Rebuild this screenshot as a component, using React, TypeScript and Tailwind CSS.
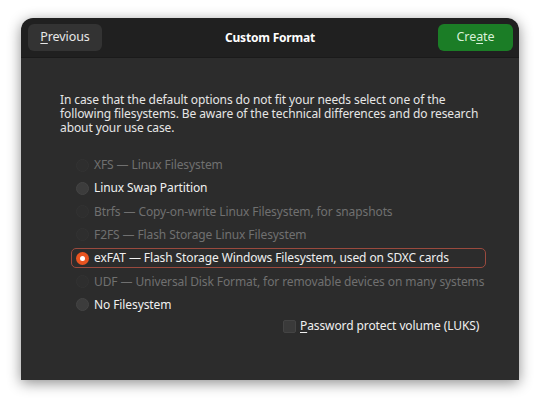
import React from "react";

const font = { fontFamily: '"Noto Sans", "Open Sans", sans-serif' };

function Radio({ state }: { state: "disabled" | "enabled" | "checked" }) {
  if (state === "checked") {
    return (
      <span className="flex h-[13px] w-[13px] shrink-0 items-center justify-center rounded-full bg-[#e95420]">
        <span className="h-[5px] w-[5px] rounded-full bg-white" />
      </span>
    );
  }
  if (state === "enabled") {
    return <span className="h-[13px] w-[13px] shrink-0 rounded-full bg-[#3c3c3c] border border-[#444]" />;
  }
  return <span className="h-[13px] w-[13px] shrink-0 rounded-full bg-[#2e2e2e] border border-[#333]" />;
}

const rows: { label: string; state: "disabled" | "enabled" | "checked" }[] = [
  { label: "XFS — Linux Filesystem", state: "disabled" },
  { label: "Linux Swap Partition", state: "enabled" },
  { label: "Btrfs — Copy-on-write Linux Filesystem, for snapshots", state: "disabled" },
  { label: "F2FS — Flash Storage Linux Filesystem", state: "disabled" },
  { label: "exFAT — Flash Storage Windows Filesystem, used on SDXC cards", state: "checked" },
  { label: "UDF — Universal Disk Format, for removable devices on many systems", state: "disabled" },
  { label: "No Filesystem", state: "enabled" },
];

export default function App() {
  return (
    <div className="w-[540px] h-[404px] bg-white pt-[18px] pl-[21px]" style={font}>
      <div className="w-[498px] h-[362px] rounded-t-[12px] overflow-hidden flex flex-col shadow-[0_3px_14px_rgba(0,0,0,0.45)]">
        <div className="h-[40px] bg-[#202020] flex items-center justify-between pl-[7px] pr-[6px] border-b border-[#1a1a1a]">
          <button className="w-[74px] h-[27px] rounded-[6px] bg-[#333333] text-[#e8e8e8] text-[12.5px] tracking-[-0.1px] flex items-center justify-center">
            <span><span className="underline underline-offset-2">P</span>revious</span>
          </button>
          <div className="text-[12px] font-bold text-white tracking-[-0.2px]">Custom Format</div>
          <button className="w-[75px] h-[27px] rounded-[6px] bg-[#1b7d26] text-[#d8f0d8] text-[12.5px] tracking-[-0.1px] flex items-center justify-center">
            <span>Cre<span className="underline underline-offset-2">a</span>te</span>
          </button>
        </div>
        <div className="flex-1 bg-[#2c2c2c] pl-[39px] pt-[35px]">
          <p className="text-[12px] tracking-[-0.1px] leading-[14px] text-[#e6e6e6] w-[425px]">
            In case that the default options do not fit your needs select one of the following filesystems. Be aware of the technical differences and do research about your use case.
          </p>
          <div className="mt-[20px] ml-[11px] flex flex-col gap-[3.33px]">
            {rows.map((r) => (
              <div
                key={r.label}
                className={
                  "h-[20px] w-[415px] flex items-center gap-[5px] pl-[4px] rounded-[5px] border " +
                  (r.state === "checked" ? "border-[#9a4a3e]" : "border-transparent")
                }
              >
                <Radio state={r.state} />
                <span
                  className={
                    "text-[12px] tracking-[-0.1px] whitespace-nowrap " +
                    (r.state === "disabled" ? "text-[#707070]" : "text-[#f0f0f0]")
                  }
                >
                  {r.label}
                </span>
              </div>
            ))}
          </div>
          <div className="mt-[2.5px] ml-[223px] flex items-center gap-[4px]">
            <span className="h-[13px] w-[13px] rounded-[2px] bg-[#3a3a3a] border border-[#444]" />
            <span className="text-[12px] tracking-[-0.1px] text-[#f0f0f0] whitespace-nowrap">
              <span className="underline underline-offset-2">P</span>assword protect volume (LUKS)
            </span>
          </div>
        </div>
      </div>
    </div>
  );
}
